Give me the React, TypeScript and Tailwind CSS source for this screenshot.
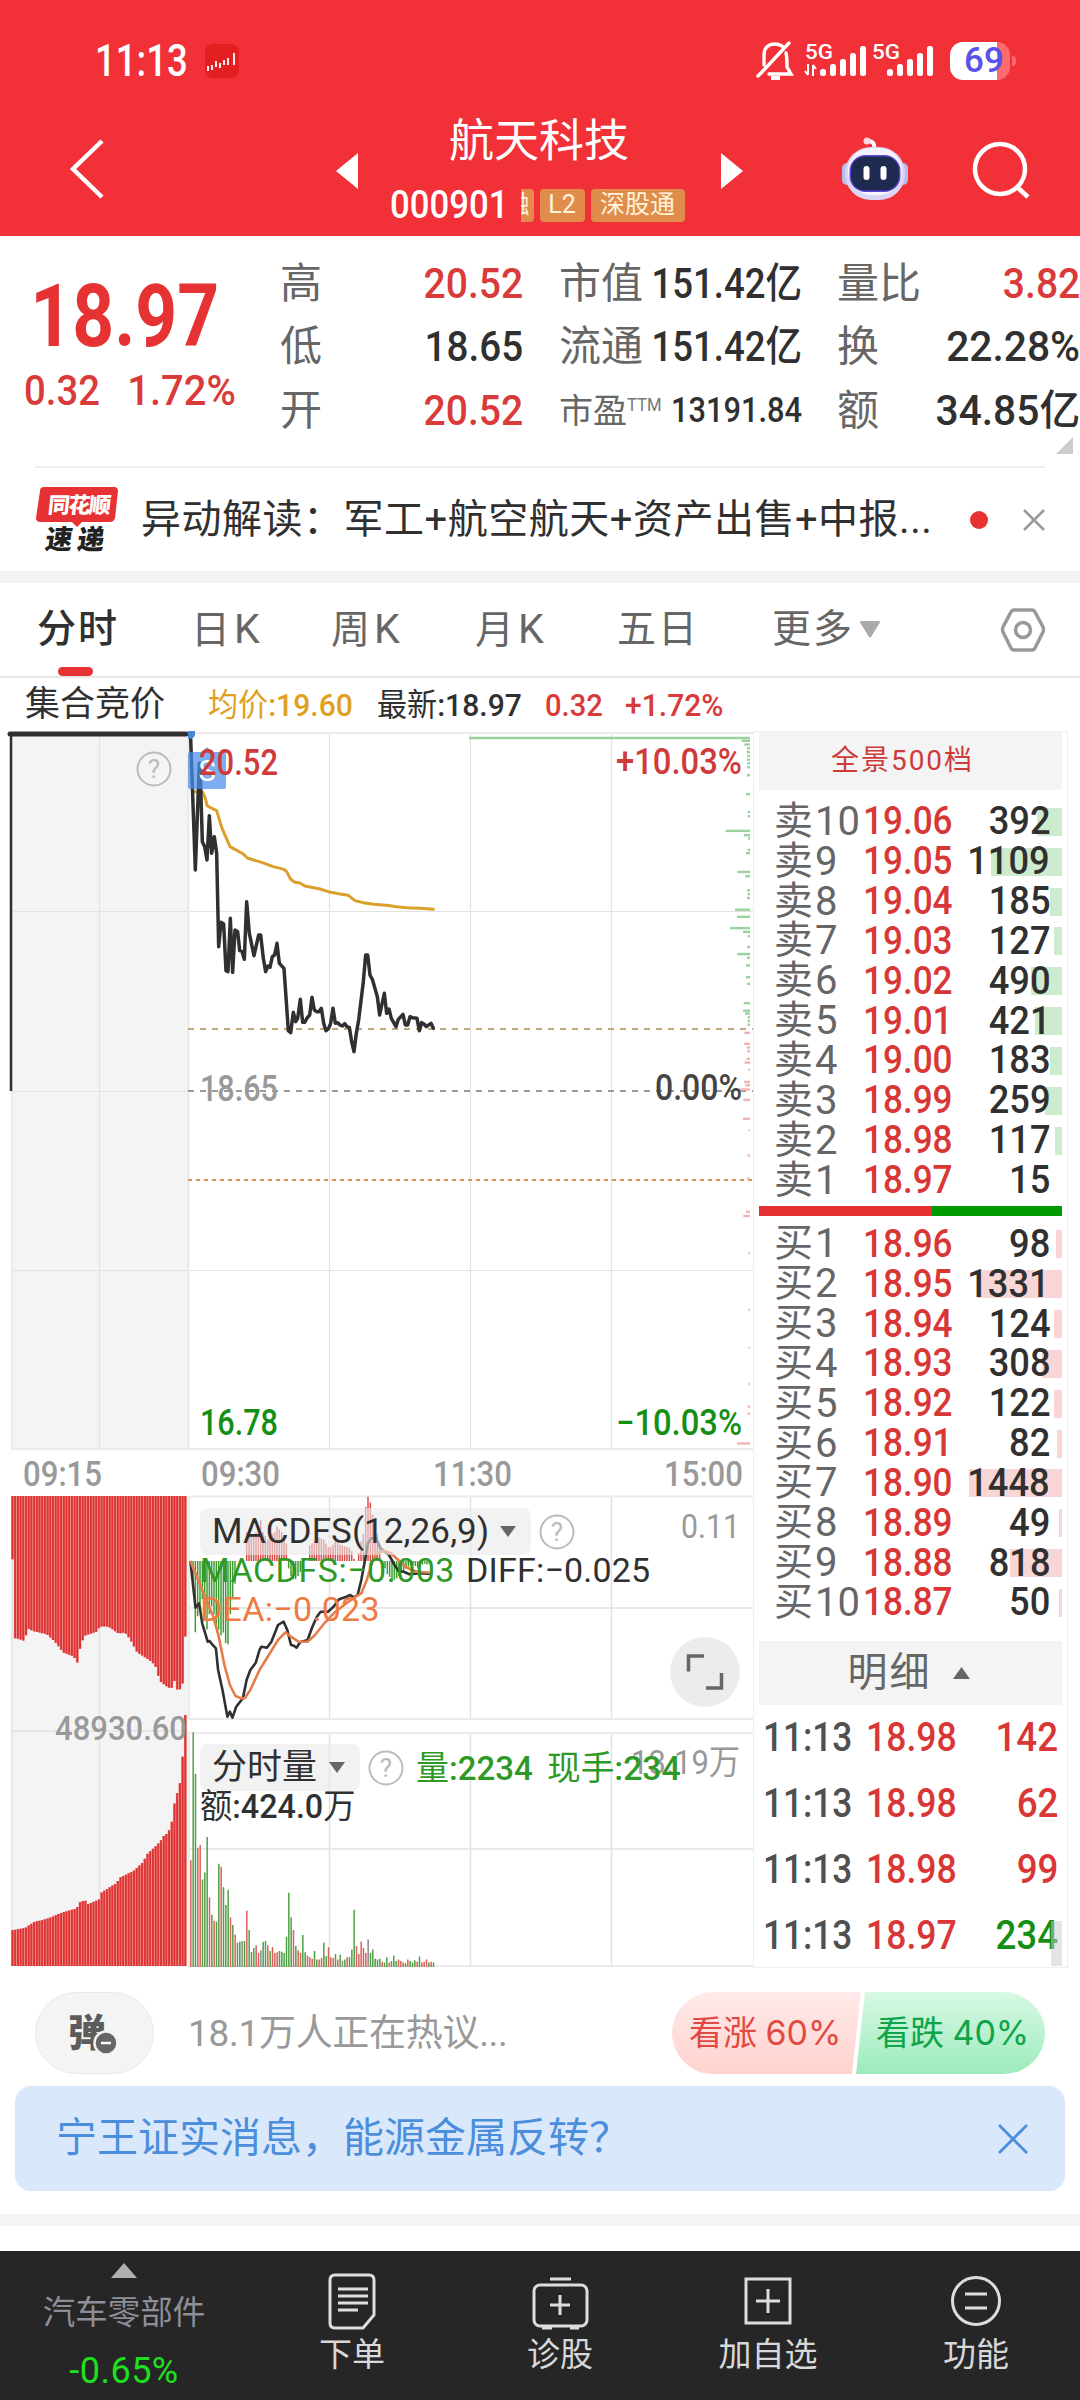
import React from "react";
import clsx from "clsx";

type Point = [number, number];
type Order = { label: string; price: string; count: number };

const SELLS: Order[] = [
  { label: "卖10", price: "19.06", count: 392 },
  { label: "卖9", price: "19.05", count: 1109 },
  { label: "卖8", price: "19.04", count: 185 },
  { label: "卖7", price: "19.03", count: 127 },
  { label: "卖6", price: "19.02", count: 490 },
  { label: "卖5", price: "19.01", count: 421 },
  { label: "卖4", price: "19.00", count: 183 },
  { label: "卖3", price: "18.99", count: 259 },
  { label: "卖2", price: "18.98", count: 117 },
  { label: "卖1", price: "18.97", count: 15 },
];

const BUYS: Order[] = [
  { label: "买1", price: "18.96", count: 98 },
  { label: "买2", price: "18.95", count: 1331 },
  { label: "买3", price: "18.94", count: 124 },
  { label: "买4", price: "18.93", count: 308 },
  { label: "买5", price: "18.92", count: 122 },
  { label: "买6", price: "18.91", count: 82 },
  { label: "买7", price: "18.90", count: 1448 },
  { label: "买8", price: "18.89", count: 49 },
  { label: "买9", price: "18.88", count: 818 },
  { label: "买10", price: "18.87", count: 50 },
];

const TRADES = [
  { time: "11:13", price: "18.98", count: 142 },
  { time: "11:13", price: "18.98", count: 62 },
  { time: "11:13", price: "18.98", count: 99 },
  { time: "11:13", price: "18.97", count: 234, down: true },
];

// price and average lines, three units per pixel
const PRICE_LINE =
  "572,55 586,450 598,130 600,130 607,365 614,380 621,420 628,287 635,400 643,350 650,400 656,680 663,607 671,612 678,752 684,755 691,595 698,757 705,630 713,635 719,692 726,694 733,718 740,545 748,640 762,707 776,645 782,645 790,715 797,755 804,738 810,742 817,710 824,705 831,670 838,730 852,745 865,932 872,938 880,877 887,905 893,895 901,838 908,907 914,907 922,893 929,885 936,832 943,870 950,875 957,875 964,865 971,910 978,932 986,925 992,910 999,865 1006,910 1013,908 1020,915 1027,918 1034,911 1041,920 1048,922 1055,965 1062,995 1069,940 1076,900 1090,785 1097,705 1103,705 1110,765 1117,778 1132,830 1139,885 1146,852 1153,820 1160,880 1167,867 1174,895 1188,920 1195,898 1209,883 1216,915 1223,915 1230,890 1237,893 1251,895 1258,932 1265,908 1272,912 1279,920 1293,910 1300,925";
const AVERAGE_LINE =
  "580,215 607,215 615,232 622,258 650,272 665,322 690,380 730,402 742,414 785,427 820,440 852,448 860,455 872,478 885,487 900,489 915,498 960,507 985,515 1020,522 1045,526 1065,542 1090,548 1120,553 1160,556 1190,560 1220,563 1260,565 1300,568";

const DIFF_LINE: Point[] = [
  [28, 243], [42, 383], [52, 370], [60, 430], [75, 485], [80, 483], [90, 497], [97, 505], [103, 570], [115, 630], [128, 710], [135, 695], [142, 713], [152, 680], [170, 655], [180, 600], [190, 570], [205, 548], [215, 510], [220, 500], [235, 503], [247, 485], [265, 435], [280, 425], [290, 450], [300, 495], [308, 497], [315, 503], [325, 487], [345, 480], [358, 440], [370, 410], [380, 395], [400, 395], [415, 380], [430, 358], [450, 350], [460, 345], [470, 352], [480, 345], [490, 300], [500, 240], [508, 190], [517, 175], [530, 175], [542, 205], [565, 225], [580, 255], [590, 272], [605, 275], [620, 283], [650, 280], [680, 282],
];
const DEA_LINE: Point[] = [
  [28, 243], [60, 330], [90, 410], [105, 470], [120, 555], [135, 615], [150, 648], [165, 655], [175, 655], [190, 630], [215, 570], [240, 525], [265, 480], [285, 457], [300, 470], [320, 485], [345, 485], [365, 465], [390, 430], [420, 395], [450, 370], [475, 350], [490, 340], [505, 300], [520, 245], [535, 220], [550, 212], [570, 220], [590, 240], [610, 262], [640, 275], [680, 278],
];
const macdPath = (points: Point[]) =>
  points.map(([x, y]) => `${(180 + x / 2.703).toFixed(1)},${(1480 + y / 3).toFixed(1)}`).join(" ");

// [level, left end] of every chip distribution bar
const CHIPS_UP: Point[] = [
  [44, 1025], [52, 1033], [60, 1041], [68, 1040], [76, 1042], [84, 1041], [92, 1042], [100, 1041], [117, 1041], [157, 1038], [195, 1043], [204, 1043], [235, 977], [244, 1032], [251, 1044], [275, 1043], [282, 1038], [322, 1012], [331, 1036], [361, 1041], [369, 1043], [377, 1041], [402, 1005], [417, 1011], [441, 990], [449, 1029], [458, 1043], [481, 1041], [496, 1012], [504, 1041], [520, 1038], [545, 1038], [559, 1041], [600, 1031], [616, 1029], [622, 1035], [630, 1043], [638, 1043], [646, 1043],
];
const CHIPS_DOWN: Point[] = [
  [663, 1033], [686, 1032], [694, 1040], [702, 1042], [718, 1040], [726, 1034], [741, 1045], [767, 1032], [774, 1036], [783, 1015], [805, 1030], [845, 1029], [869, 1046], [923, 1043], [972, 1041], [1042, 1038], [1051, 1030], [1130, 1046], [1250, 1045], [1330, 1046], [1407, 1045], [1455, 1043], [1470, 1043], [1533, 1011],
];

// outlines of the call auction bars
const AUCTION_TOP: Point[] = [
  [33, 416], [38, 416], [39, 622], [60, 625], [68, 630], [75, 625], [83, 597], [100, 604], [140, 612], [165, 632], [190, 660], [222, 670], [231, 690], [240, 650], [252, 617], [290, 605], [300, 592], [325, 592], [355, 610], [375, 608], [390, 625], [412, 660], [440, 675], [465, 692], [480, 735], [505, 752], [520, 752], [524, 732], [530, 757], [545, 755], [548, 740], [553, 618], [560, 618],
];
const AUCTION_BOTTOM: Point[] = [
  [39, 1385], [75, 1380], [100, 1365], [150, 1353], [190, 1338], [230, 1329], [238, 1313], [255, 1307], [262, 1318], [298, 1305], [303, 1288], [350, 1262], [360, 1248], [400, 1231], [430, 1207], [440, 1188], [480, 1155], [490, 1140], [505, 1130], [515, 1105], [522, 1060], [530, 1032], [538, 1010], [546, 970], [553, 823], [560, 823],
];

const sample = (points: Point[], x: number) => {
  const next = points.findIndex((p) => p[0] >= x);
  if (next <= 0) return points[0][1];
  const [x0, y0] = points[next - 1];
  const [x1, y1] = points[next];
  return y0 + ((y1 - y0) * (x - x0)) / (x1 - x0);
};
const lowerY = (y: number) => 1400 + y / 2.6133;

const MACD_BARS: [number, number[]][] = [
  [579, [480, 607, 565, 530, 520, 560, 600, 560, 540, 560, 590, 600, 615, 608, 635, 638, 560, 520, 480]],
  [740, [345, 355, 350, 355, 345, 330, 314, 345, 355, 365, 362, 350, 345, 330, 338, 345, 355, 375]],
  [866, [440, 460, 468, 468, 460, 450, 430]],
  [929, [380, 375, 368, 360, 360, 362, 365, 375, 385, 385, 378, 370, 372, 378, 380, 382, 384, 386, 395, 415]],
  [1076, [400, 370, 350, 280, 253, 268, 300, 320, 350, 380]],
  [1148, [430, 440, 455, 462, 470, 470, 466, 460, 452, 446, 440, 436, 432, 430, 434, 438, 436, 430, 428, 430, 428]],
];

const VOLUMES =
  "r1203 g868 g977 r1170 r1163 g1253 g1235 g1142 r1300 g1345 r1361 g1363 g1212 r1220 g1273 g1320 g1280 r1352 g1372 r1397 g1418 g1416 k1414 g1414 r1335 g1385 g1443 g1432 r1425 r1445 k1438 g1416 g1414 r1425 g1440 r1430 r1445 r1443 g1440 g1442 g1445 g1403 g1288 g1352 r1385 g1427 r1438 r1445 g1398 g1443 r1452 r1456 r1460 g1440 g1462 r1462 r1458 g1418 g1453 r1430 r1456 r1458 g1448 r1462 g1450 k1465 g1462 r1456 g1456 g1436 g1332 r1427 r1448 r1416 r1432 r1445 k1410 g1445 g1436 g1460 g1462 g1460 r1468 g1470 g1456 r1470 g1466 g1452 g1466 r1462 r1466 r1470 g1472 r1462 g1466 g1470 g1464 r1468 g1454 r1470 r1468 r1462 g1470 r1468 g1470".split(" ");
const VOLUME_COLORS: Record<string, string> = { r: "#d9605c", g: "#4f9f43", k: "#8a8a90" };

function Num({ children, className }: { children: React.ReactNode; className?: string }) {
  return <span className={clsx("inline-block whitespace-nowrap font-medium", className)}>{children}</span>;
}

function Signal({ data }: { data?: boolean }) {
  return (
    <svg className="overflow-visible" width="62" height="38" viewBox="0 0 62 38" fill="#fff">
      <text x="0" y="17" fontSize="21" fontWeight="500" textLength="28" lengthAdjust="spacingAndGlyphs">
        5G
      </text>
      {data && <path d="M3 22v11M3 33l-3-4M8 34V23M8 23l3 4" stroke="#fff" strokeWidth="2" />}
      {[27, 22, 17, 11, 4].map((top, i) => (
        <rect key={top} x={15 + i * 10} y={top} width="6" height={34 - top} rx="2.5" />
      ))}
    </svg>
  );
}

function StatusBar() {
  return (
    <div className="flex h-[121px] items-center pl-[95px]">
      <Num className="w-[110px] origin-left scale-x-[0.83] text-[44px] leading-none text-white">11:13</Num>
      <svg width="34" height="34" viewBox="0 0 34 34">
        <rect width="34" height="34" rx="8" fill="#e31f22" />
        <path d="M3 22v5M7 21v5M11 17v6M15 19v5M19 16v5M23 14v7M29 9v12" stroke="#fff" strokeWidth="1.800" />
      </svg>
      <div className="ml-[517px] flex items-center">
        <svg width="38" height="40" viewBox="0 0 38 40" fill="none" stroke="#fff" strokeWidth="3.400">
          <path d="M8 24V14c0-8 5-11 11-11 3 0 5 1 7 2M30 12c1 4 1 9 1 14l4 7H13M5 32 33 2M2 35l3-3" strokeLinecap="round" />
          <path d="M15 37h9" strokeWidth="4" />
        </svg>
        <div className="ml-[11px] flex gap-[5px]">
          <Signal data />
          <Signal />
        </div>
        <div className="ml-[16px] flex h-[38px] w-[60px] items-center overflow-hidden rounded-[13px] bg-linear-to-r from-white from-[78%] to-[#fb6b70] to-[78%]">
          <span className="w-full pl-[8px] text-center text-[35px] leading-none font-medium text-[#5a50ea]">69</span>
        </div>
        <div className="ml-[2px] h-[10px] w-1 rounded-r-full bg-[#fb6b70]" />
      </div>
    </div>
  );
}

function Robot() {
  return (
    <svg width="66" height="64" viewBox="0 0 66 64">
      <path d="M32 12c1-5-1-8-6-8" fill="none" stroke="#fff" strokeWidth="4" strokeLinecap="round" />
      <circle cx="25" cy="4" r="3.5" fill="#ffd7dc" />
      <rect x="0" y="26" width="10" height="22" rx="5" fill="#b9bbe8" />
      <rect x="56" y="26" width="10" height="22" rx="5" fill="#b9bbe8" />
      <rect x="3" y="10" width="60" height="53" rx="26" fill="#d9d7f5" />
      <rect x="6" y="11" width="54" height="47" rx="23" fill="#f6f4ff" />
      <rect x="7.500" y="18" width="51" height="37" rx="16" fill="#5b48d8" />
      <rect x="9" y="19.500" width="48" height="34" rx="14" fill="#1f2a50" />
      <rect x="21.500" y="29" width="6" height="14" rx="3" fill="#fff" />
      <rect x="38.500" y="29" width="6" height="14" rx="3" fill="#fff" />
    </svg>
  );
}

function TitleBar() {
  return (
    <div className="flex h-[115px] items-start">
      <svg className="mt-[17px] ml-[68px]" width="40" height="62" viewBox="0 0 40 62" fill="none">
        <path d="M34 3 5 31l29 28" stroke="#fff" strokeWidth="4.500" />
      </svg>
      <svg className="mt-[32px] ml-[228px]" width="22" height="36" viewBox="0 0 22 36">
        <path d="M22 0v36L0 18z" fill="#fff" />
      </svg>
      <div className="flex w-[363px] flex-col items-center pr-[5px] text-white">
        <h1 className="-mt-[4px] pl-[4px] text-[45px] leading-[50px]">航天科技</h1>
        <div className="mt-[21px] flex h-[34px] items-center text-[25px] text-[#fff3dc]">
          <Num className="w-[131px] origin-left scale-x-[0.89] text-[39px] leading-none text-white">000901</Num>
          <span className="flex h-[33px] w-[13px] items-center justify-end overflow-hidden rounded-r bg-[#e08c4a] pr-1">融</span>
          <span className="ml-[6px] flex h-[33px] w-[45px] items-center justify-center rounded bg-[#e08c4a]">L2</span>
          <span className="ml-[6px] flex h-[33px] w-[94px] items-center justify-center rounded bg-[#e08c4a]">深股通</span>
        </div>
      </div>
      <svg className="mt-[32px]" width="22" height="36" viewBox="0 0 22 36">
        <path d="M0 0v36l22-18z" fill="#fff" />
      </svg>
      <div className="mt-4 ml-[99px]">
        <Robot />
      </div>
      <svg className="mt-5 ml-[64px]" width="60" height="60" viewBox="0 0 60 60" fill="none" stroke="#fff" strokeWidth="4.500">
        <circle cx="28" cy="28" r="25" />
        <path d="m45 46 11 10" />
      </svg>
    </div>
  );
}

function QuoteRow({ label, value, className }: { label: string; value: string; className: string }) {
  return (
    <div className="flex h-[63.500px] w-[243px] items-center justify-between text-[42px] leading-none">
      <span className="w-0 whitespace-nowrap text-[#666]">{label}</span>
      <Num className={clsx("origin-right", className)}>{value}</Num>
    </div>
  );
}

function Quote() {
  return (
    <section className="flex h-[230px] pt-[16px]">
      <div className="flex w-[280px] flex-col items-center pt-[14px] pr-[30px] text-[#e63232]">
        <span className="scale-x-[0.83] text-[88px] leading-[100px] font-bold">18.97</span>
        <div className="mt-[2px] ml-[9px] flex w-[212px] justify-between text-[43px] leading-[44px] text-[#d93a3a]">
          <Num className="origin-left scale-x-[0.89]">0.32</Num>
          <Num className="origin-right scale-x-[0.93]">1.72%</Num>
        </div>
      </div>
      <div>
        <QuoteRow label="高" value="20.52" className="scale-x-[0.93] text-[#d93a3a]" />
        <QuoteRow label="低" value="18.65" className="scale-x-[0.92] text-[#303030]" />
        <QuoteRow label="开" value="20.52" className="scale-x-[0.93] text-[#d93a3a]" />
      </div>
      <div className="ml-[36px]">
        <QuoteRow label="市值" value="151.42亿" className="scale-x-[0.87] text-[#303030]" />
        <QuoteRow label="流通" value="151.42亿" className="scale-x-[0.87] text-[#303030]" />
        <div className="flex h-[63.500px] w-[243px] items-center justify-between text-[34px] leading-none">
          <div className="flex w-0 items-center whitespace-nowrap">
            <span className="text-[#666]">市盈</span>
            <span className="-mt-3 inline-block origin-left scale-x-[0.88] text-[19px] text-[#777]">TTM</span>
          </div>
          <Num className="origin-right scale-x-[0.88] text-[35px] text-[#303030]">13191.84</Num>
        </div>
      </div>
      <div className="ml-[35px]">
        <QuoteRow label="量比" value="3.82" className="scale-x-[0.93] text-[#d93a3a]" />
        <QuoteRow label="换" value="22.28%" className="scale-x-[0.97] text-[#303030]" />
        <QuoteRow label="额" value="34.85亿" className="scale-x-[0.97] text-[#303030]" />
        <svg className="-mt-[6px] ml-[219px]" width="17" height="17" viewBox="0 0 17 17">
          <path d="M17 0v17H0z" fill="#ccc" />
        </svg>
      </div>
    </section>
  );
}

function News() {
  return (
    <section className="mx-[35px] flex h-[105px] items-center border-t-2 border-[#eee]">
      <svg className="shrink-0" width="84" height="68" viewBox="0 0 84 68">
        <path d="M9 1h70q4 0 4 4l-3 27q-1 4-5 4H47l-5 5-5-5H5q-4 0-4-4L5 5q0-4 4-4z" fill="#e63232" />
        <text x="15" y="27" transform="skewX(-6)" fontSize="22" fontWeight="900" fill="#fff" textLength="63">
          同花顺
        </text>
        <text x="18" y="63" transform="skewX(-8)" fontSize="27" fontWeight="900" fill="#222" textLength="59">
          速递
        </text>
      </svg>
      <p className="ml-[22px] w-[812px] shrink-0 text-[40px] leading-[60px] tracking-[0.500px] whitespace-nowrap text-[#303030]">
        异动解读：军工+航空航天+资产出售+中报...
      </p>
      <span className="ml-[17px] h-[18px] w-[18px] shrink-0 rounded-full bg-[#e63232]" />
      <svg className="ml-[34px] shrink-0" width="24" height="24" viewBox="0 0 24 24" stroke="#999" strokeWidth="2.500">
        <path d="m2 2 20 20M22 2 2 22" />
      </svg>
    </section>
  );
}

function Tabs() {
  return (
    <nav className="grid h-[105px] grid-cols-[154px_140px_144px_142px_155px_231px_1fr] items-center border-t-[12px] border-[#f4f4f4] pl-[37px] text-[39px] leading-none tracking-[2px] text-[#666]">
      <span className="relative font-medium text-[#303030]">
        分时
        <i className="absolute -bottom-[27px] left-[21px] h-[9px] w-[35px] rounded-full bg-[#e63232]" />
      </span>
      {["日", "周", "月"].map((period) => (
        <span key={period}>
          {period}
          <span className="ml-[2px] text-[41px]">K</span>
        </span>
      ))}
      <span>五日</span>
      <span className="flex items-center gap-[6px]">
        更多
        <svg width="20" height="17" viewBox="0 0 20 17">
          <path d="M1 0h18q2 1 0 3l-8 13q-1 1-2 0L1 3Q-1 1 1 0z" fill="#aaa" />
        </svg>
      </span>
      <svg className="-ml-[3px]" width="46" height="44" viewBox="0 0 46 44" fill="none" stroke="#999" strokeWidth="3.500">
        <path d="M14 2h18q2 0 3 2l8 15q1 3 0 5l-8 16q-1 2-3 2H14q-2 0-3-2L3 24q-1-2 0-5l8-15q1-2 3-2z" />
        <circle cx="23" cy="22" r="7.500" />
      </svg>
    </nav>
  );
}

function InfoRow() {
  return (
    <div className="grid h-[55px] grid-cols-[183px_169px_168px_80px_1fr] items-center border-t-2 border-[#e8e8e8] pl-[25px] text-[32px] leading-none text-[#303030]">
      <span className="text-[35px]">集合竞价</span>
      <Num className="origin-left scale-x-[0.94] text-[#e0a01e]">
        <span className="font-normal">均价</span>:19.60
      </Num>
      <Num className="origin-left scale-x-[0.94]">
        <span className="font-normal">最新</span>:18.97
      </Num>
      <Num className="origin-left scale-x-[0.91] text-[#d93a3a]">0.32</Num>
      <Num className="origin-left scale-x-[0.94] text-[#d93a3a]">+1.72%</Num>
    </div>
  );
}

function Help({ cx, cy }: { cx: number; cy: number }) {
  return (
    <g>
      <circle cx={cx} cy={cy} r="16.500" fill="none" stroke="#bbb" strokeWidth="2" />
      <text x={cx} y={cy + 9} fontSize="26" textAnchor="middle" fill="#bbb">
        ?
      </text>
    </g>
  );
}

function PriceChart() {
  return (
    <svg className="block" width="753" height="720" viewBox="0 731 753 720">
      <rect x="11" y="733" width="179" height="716" fill="#f4f4f4" />
      <g stroke="#e2e2e2" strokeWidth="1.200" fill="none">
        <path d="M99.500 733v716M329.500 733v716M470.500 733v716M611.500 733v716" />
        <path d="M11 911.500h742M11 1091.500h177M11 1270.500h742" />
      </g>
      <g stroke="#ebebeb" strokeWidth="2" fill="none">
        <path d="M188 733v716M188 733h565M11 1449h742M12 733v716" />
      </g>
      <path d="M188 1029h565" stroke="#c2a67c" strokeWidth="1.800" strokeDasharray="6 6" />
      <path d="M188 1091h565" stroke="#999" strokeWidth="1.800" strokeDasharray="6 6" />
      <path d="M188 1180h565" stroke="#d09a52" strokeWidth="2" strokeDasharray="4 4" />
      <path d="M469 738h281" stroke="#9ad29b" strokeWidth="2.500" />
      {CHIPS_UP.map(([y, x]) => (
        <path key={y} d={`M${400 + x / 3} ${720 + y / 2.119}H750`} stroke="#9ad29b" strokeWidth="2.400" />
      ))}
      {CHIPS_DOWN.map(([y, x]) => (
        <path key={y} d={`M${400 + x / 3} ${720 + y / 2.119}H750`} stroke="#f1b3b3" strokeWidth="2.400" />
      ))}
      <g transform="translate(0 720) scale(.33333)" fill="none" strokeLinejoin="round" strokeLinecap="round">
        <polyline points={AVERAGE_LINE} stroke="#dba02c" strokeWidth="9" />
        <polyline points={PRICE_LINE} stroke="#303030" strokeWidth="10.500" />
      </g>
      <path d="M11 736v355" stroke="#303030" strokeWidth="2.500" />
      <path d="M10 734h176" stroke="#303030" strokeWidth="5" strokeLinecap="round" />
      <Help cx={154} cy={769} />
      <path d="M188 731h7v4q-1 4-7 4z" fill="#4a86d0" />
      <path d="M190 752h12l5-5 5 5h12q2 0 2 2v33q0 2-2 2h-34q-2 0-2-2v-33q0-2 2-2z" fill="#4a8eea" opacity=".72" />
      <text x="207" y="781" fontSize="29" fill="#fff" textAnchor="middle">
        S
      </text>
      <g fontSize="36" fontWeight="500">
        <text x="199" y="775" fill="#cf3a3a" textLength="79" lengthAdjust="spacingAndGlyphs">20.52</text>
        <text x="616" y="774" fill="#cf3a3a" textLength="126" lengthAdjust="spacingAndGlyphs">+10.03%</text>
        <text x="200" y="1101" fill="#999" textLength="78" lengthAdjust="spacingAndGlyphs">18.65</text>
        <text x="655" y="1100" fill="#444" textLength="87" lengthAdjust="spacingAndGlyphs">0.00%</text>
        <text x="200" y="1435" fill="#148f14" textLength="78" lengthAdjust="spacingAndGlyphs">16.78</text>
        <text x="616" y="1435" fill="#148f14" textLength="126" lengthAdjust="spacingAndGlyphs">−10.03%</text>
      </g>
    </svg>
  );
}

function AuctionBars() {
  const bars = Array.from({ length: 65 }, (_, i) => 11.5 + i * 2.7);
  return (
    <svg className="block" width="188" height="473" viewBox="0 1495 188 473">
      <rect x="11" y="1496" width="177" height="471" fill="#f4f4f4" />
      <path d="M99.500 1496v470M11 1731h177M12 1496v470" stroke="#e2e2e2" strokeWidth="1.500" fill="none" />
      {bars.map((x) => {
        const top = lowerY(sample(AUCTION_TOP, x * 3 + 3));
        const bottom = lowerY(sample(AUCTION_BOTTOM, x * 3 + 3));
        return (
          <g key={x}>
            <path d={`M${x + 1} 1496V${top}M${x + 1} 1966V${bottom}`} stroke="#f07d79" strokeWidth="2.700" />
            <path d={`M${x + 1} 1496V${top}M${x + 1} 1966V${bottom}`} stroke="#dc3434" strokeWidth="1.900" />
          </g>
        );
      })}
      <text x="55" y="1740" fontSize="34" fontWeight="500" fill="#999" textLength="132" lengthAdjust="spacingAndGlyphs">
        48930.60
      </text>
    </svg>
  );
}

function Chip({ children }: { children: React.ReactNode }) {
  return (
    <span className="flex h-[47px] items-center rounded-lg bg-[#e9e9e9]/60 pr-[15px] pl-[12px] leading-none whitespace-nowrap text-[#303030]">
      {children}
      <svg className="ml-[12px]" width="16" height="11" viewBox="0 0 16 11">
        <path d="M0 0h16L8 11z" fill="#666" />
      </svg>
    </span>
  );
}

function HelpIcon() {
  return (
    <svg className="ml-[8px]" width="36" height="36" viewBox="0 0 36 36">
      <Help cx={18} cy={18} />
    </svg>
  );
}

function MacdPanel() {
  return (
    <div className="relative">
      <svg className="block" width="565" height="226" viewBox="188 1495 565 226">
        <path d="M329.500 1496v223M470.500 1496v223M611.500 1496v223M188 1608h565" stroke="#e2e2e2" strokeWidth="1.500" fill="none" />
        <path d="M188 1496.500h565M188 1719h565M189 1496v223" stroke="#ebebeb" strokeWidth="2" fill="none" />
        {MACD_BARS.flatMap(([start, values]) =>
          values.map((v, i) => {
            const x = (start + i * 7) / 3;
            return <path key={x} d={`M${x} 1561V${lowerY(v)}`} stroke={v > 420 ? "#3f9c35" : "#dd4a4a"} strokeWidth="1.500" />;
          }),
        )}
        <polyline points={macdPath(DIFF_LINE)} fill="none" stroke="#303030" strokeWidth="2.600" strokeLinejoin="round" />
        <polyline points={macdPath(DEA_LINE)} fill="none" stroke="#e57d4a" strokeWidth="2.600" strokeLinejoin="round" />
        <text x="681" y="1538" fontSize="34" fill="#999" textLength="59" lengthAdjust="spacingAndGlyphs">0.11</text>
      </svg>
      <div className="absolute top-[13px] left-[12px] text-[34px]">
        <div className="flex items-center">
          <Chip>
            <span className="w-[276px] text-[35px] tracking-[0.100px]">MACDFS(12,26,9)</span>
          </Chip>
          <HelpIcon />
        </div>
        <div className="-mt-[4px] flex leading-[39px] whitespace-nowrap">
          <span className="w-[266px] tracking-[0.500px] text-[#2e9926]">MACDFS:−0.003</span>
          <span className="tracking-[0.200px] text-[#303030]">DIFF:−0.025</span>
        </div>
        <div className="leading-[39px] tracking-[0.300px] text-[#ee7a45]">DEA:−0.023</div>
      </div>
      <button className="absolute top-[142px] left-[482px] flex h-[70px] w-[70px] items-center justify-center rounded-full bg-[#ececec]">
        <svg width="38" height="38" viewBox="0 0 38 38" fill="none" stroke="#666" strokeWidth="3.500">
          <path d="M2.500 18.500V3H18M20 35h15.500V20" />
        </svg>
      </button>
    </div>
  );
}

function VolumePanel() {
  return (
    <div className="relative mt-[11px]">
      <svg className="block" width="565" height="236" viewBox="188 1732 565 236">
        <path d="M329.500 1733v233M470.500 1733v233M611.500 1733v233M188 1849h565" stroke="#e2e2e2" strokeWidth="1.500" fill="none" />
        <path d="M188 1733h565M188 1966h565M189 1733v233" stroke="#ebebeb" strokeWidth="2" fill="none" />
        {VOLUMES.map((v, i) => (
          <path key={i} d={`M${(572.5 + i * 7) / 3} 1967V${lowerY(Number(v.slice(1)))}`} stroke={VOLUME_COLORS[v[0]]} strokeWidth="1.500" />
        ))}
        <text x="631" y="1774" fontSize="34" fill="#999" textLength="109" lengthAdjust="spacingAndGlyphs">13.19万</text>
      </svg>
      <div className="absolute top-[12px] left-[12px] text-[34px]">
        <div className="flex items-center">
          <Chip>
            <span className="text-[35px]">分时量</span>
          </Chip>
          <HelpIcon />
          <Num className="ml-[12px] w-[131px] origin-left scale-x-[0.97] leading-none text-[#2e9926]">
            <span className="font-normal">量</span>:2234
          </Num>
          <Num className="origin-left scale-x-[0.99] leading-none text-[#2e9926]">
            <span className="font-normal">现手</span>:234
          </Num>
        </div>
        <div className="-mt-[5px] flex">
          <Num className="origin-left scale-x-[0.95] leading-[40px] text-[#303030]">
            <span className="font-normal">额</span>:424.0<span className="font-normal">万</span>
          </Num>
        </div>
      </div>
    </div>
  );
}

function Charts() {
  return (
    <div className="w-[753px]">
      <PriceChart />
      <div className="flex h-[44px] items-center pt-[3px] pl-[23px] text-[35px] leading-none text-[#999]">
        <Num className="w-[178px] origin-left scale-x-[0.89]">09:15</Num>
        <Num className="w-[232px] origin-left scale-x-[0.89]">09:30</Num>
        <Num className="w-[231px] origin-left scale-x-[0.89]">11:30</Num>
        <Num className="origin-left scale-x-[0.89]">15:00</Num>
      </div>
      <div className="flex">
        <AuctionBars />
        <div>
          <MacdPanel />
          <VolumePanel />
        </div>
      </div>
    </div>
  );
}

function OrderRow({ label, price, count, bar }: Order & { bar: string }) {
  return (
    <div className="relative flex h-[39.850px] items-center leading-none whitespace-nowrap">
      {count > 20 && <div className={clsx("absolute right-0 h-[28px]", bar)} style={{ width: count / 15.6 }} />}
      <span className="relative ml-[15px] flex w-[89px] shrink-0 text-[39px] text-[#666]">
        {label[0]}
        <span className="ml-[2px] text-[40px]">{label.slice(1)}</span>
      </span>
      <Num className="relative shrink-0 origin-left scale-x-[0.9] text-[39px] text-[#d93636]">{price}</Num>
      <div className="relative mr-[12px] ml-auto flex w-0 justify-end">
        <Num className="origin-right scale-x-[0.93] text-[39px] text-[#303030]">{count}</Num>
      </div>
    </div>
  );
}

function OrderBook() {
  return (
    <aside className="h-[1237px] w-[315px] border border-[#eee] px-[5px]">
      <div className="flex h-[58px] items-center justify-center bg-[#f4f4f4] pr-4 text-[28px] tracking-[2px] text-[#cf3a3a]">全景500档</div>
      <div className="mt-[12px]">
        {SELLS.map((o) => (
          <OrderRow key={o.label} {...o} bar="bg-[#cdebce]" />
        ))}
      </div>
      <div className="mt-[6px] flex h-[10px]">
        <div className="w-[173px] bg-[#e53131]" />
        <div className="flex-1 bg-[#009900]" />
      </div>
      <div className="mt-[8px]">
        {BUYS.map((o) => (
          <OrderRow key={o.label} {...o} bar="bg-[#f9d6d6]" />
        ))}
      </div>
      <div className="mt-[18px] flex h-[64px] items-center justify-center gap-[21px] bg-[#f4f4f4] pr-1 text-[40px] leading-none tracking-[2px] text-[#666]">
        明细
        <svg width="17" height="12" viewBox="0 0 17 12">
          <path d="M0 12h17L8.500 0z" fill="#666" />
        </svg>
      </div>
      <div className="relative">
        {TRADES.map((t, i) => (
          <div key={i} className="flex h-[66px] items-center px-[4px] text-[40px] leading-none">
            <Num className="w-[103px] origin-left scale-x-[0.88] text-[#505050]">{t.time}</Num>
            <Num className="origin-left scale-x-[0.89] text-[#d93636]">{t.price}</Num>
            <Num className={clsx("ml-auto origin-right scale-x-[0.92]", t.down ? "text-[#148f14]" : "text-[#d93636]")}>{t.count}</Num>
          </div>
        ))}
        <div className="absolute right-0 bottom-[3px] h-[45px] w-[11px] bg-[#c9c9d2]/50" />
      </div>
    </aside>
  );
}

function Discuss() {
  return (
    <section className="mt-[24px] flex h-[82px] items-center px-[35px] leading-none">
      <div className="flex h-full w-[119px] items-center rounded-full border border-[#eaeaea] bg-[#f4f4f4] pl-[32px]">
        <span className="text-[38px] font-black text-[#5c5c5c]">弹</span>
        <svg className="mt-[20px] -ml-[13px]" width="26" height="26" viewBox="0 0 26 26">
          <circle cx="13" cy="13" r="11.500" fill="#666" stroke="#f4f4f4" strokeWidth="2.500" />
          <path d="M8 13h10" stroke="#fff" strokeWidth="2.500" />
        </svg>
      </div>
      <span className="ml-[34px] text-[37px] tracking-[-0.300px] text-[#999]">18.1万人正在热议...</span>
      <div className="relative ml-auto flex h-full w-[373px] items-center text-[34px]">
        <svg className="absolute inset-0" width="373" height="82" viewBox="0 0 373 82">
          <defs>
            <linearGradient id="up" x2="0" y2="1">
              <stop stopColor="#ffeae9" />
              <stop offset="1" stopColor="#ffd2ce" />
            </linearGradient>
            <linearGradient id="down" x2="0" y2="1">
              <stop stopColor="#d8f9e5" />
              <stop offset="1" stopColor="#9cebbc" />
            </linearGradient>
          </defs>
          <path d="M41 0h148l-9 82H41a41 41 0 0 1 0-82z" fill="url(#up)" />
          <path d="M193 0h139a41 41 0 0 1 0 82H184z" fill="url(#down)" />
        </svg>
        <span className="relative ml-[17px] w-[187px] whitespace-nowrap text-[#e04a42]">
          看涨 <span className="font-[Inter] text-[34px]">60%</span>
        </span>
        <span className="relative whitespace-nowrap text-[#0fa34a]">
          看跌 <span className="font-[Inter] text-[34px]">40%</span>
        </span>
      </div>
    </section>
  );
}

function Banner() {
  return (
    <section className="mx-[15px] mt-[12px] flex h-[105px] items-center justify-between rounded-2xl bg-[#dae8fb] pr-[36px] pl-[41px] text-[#4a8edc]">
      <span className="text-[41px] leading-none">宁王证实消息，能源金属反转？</span>
      <svg width="32" height="32" viewBox="0 0 32 32" stroke="#4a8edc" strokeWidth="2.800">
        <path d="m2 2 28 28M30 2 2 30" />
      </svg>
    </section>
  );
}

function NavItem({ text, children }: { text: string; children: React.ReactNode }) {
  return (
    <div className="flex w-[208px] flex-col items-center pt-[21px]">
      <svg width="58" height="58" viewBox="0 0 58 58" fill="none" stroke="#ddd" strokeWidth="3">
        {children}
      </svg>
      <span className="mt-[6px] text-[33px] leading-[38px] text-[#d8d8d8]">{text}</span>
    </div>
  );
}

function BottomNav() {
  return (
    <footer className="flex h-[150px] bg-[#262626]">
      <div className="flex w-[248px] flex-col items-center pt-[12px]">
        <svg width="26" height="15" viewBox="0 0 26 15">
          <path d="M0 15h26L13 0z" fill="#b0b0b0" />
        </svg>
        <span className="mt-[16px] text-[32.500px] leading-[38px] text-[#8e8e98]">汽车零部件</span>
        <span className="mt-[20px] text-[36px] leading-[38px] tracking-[0.500px] text-[#1fe01f]">-0.65%</span>
      </div>
      <NavItem text="下单">
        <path d="M12 3h34q5 0 5 5v35L40 56H12q-5 0-5-5V8q0-5 5-5z" />
        <path d="M15 17h30M15 24h30M15 31h30M15 38h20" />
      </NavItem>
      <NavItem text="诊股">
        <rect x="3" y="13" width="53" height="41" rx="6" />
        <path d="M19 7h21M29 23v20M19 33h20M11 56h10M39 56h9" />
      </NavItem>
      <NavItem text="加自选">
        <rect x="7" y="7" width="44" height="44" />
        <path d="M29 17v24M17 29h24" />
      </NavItem>
      <NavItem text="功能">
        <circle cx="29" cy="29" r="23.500" />
        <path d="M18 22h22M18 36h22" />
      </NavItem>
    </footer>
  );
}

export default function App() {
  return (
    <div className="h-[2400px] w-[1080px] overflow-hidden bg-white font-[Roboto,'Noto_Sans_CJK_SC',sans-serif]">
      <header className="h-[236px] bg-[#f13038]">
        <StatusBar />
        <TitleBar />
      </header>
      <Quote />
      <News />
      <Tabs />
      <InfoRow />
      <div className="flex">
        <Charts />
        <OrderBook />
      </div>
      <Discuss />
      <Banner />
      <div className="mt-[23px] mb-[25px] h-[12px] bg-[#f4f4f4]" />
      <BottomNav />
    </div>
  );
}
